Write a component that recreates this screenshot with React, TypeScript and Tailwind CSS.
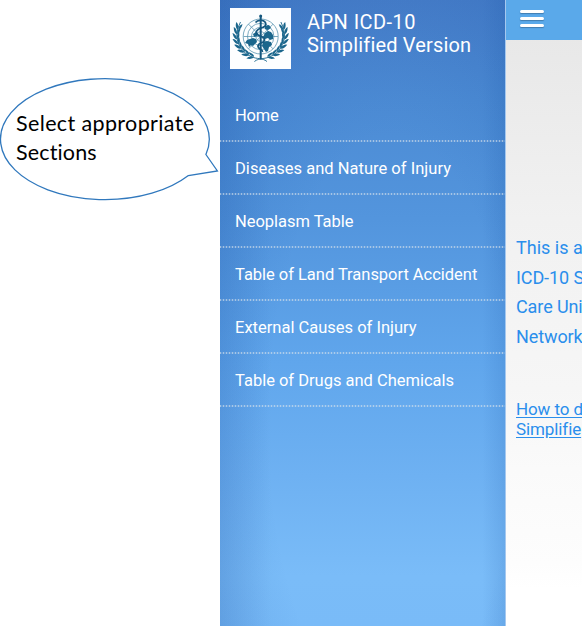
const sections = [
  { label: "Home", spacing: "tracking-[-0.25px]" },
  { label: "Diseases and Nature of Injury", spacing: "tracking-[0.02px]" },
  { label: "Neoplasm Table", spacing: "tracking-[-0.03px]" },
  { label: "Table of Land Transport Accident", spacing: "tracking-[-0.03px]" },
  { label: "External Causes of Injury", spacing: "tracking-[0px]" },
  { label: "Table of Drugs and Chemicals", spacing: "tracking-[-0.01px]" },
];

/* Angles of the leaf pairs along one laurel branch, from the bottom up. */
const leafAngles = [106, 119, 132, 145, 158, 171, 184, 196];

function Branch() {
  return (
    <g>
      <path d="M37 53.5C32 49.5 27 51.5 21 48.5C12 44.5 6.8 36 6.8 27Q7 20 10.5 14" fill="none" stroke="#1b668c" strokeWidth="0.9" />
      {leafAngles.map((a) => {
        const r = (a * Math.PI) / 180;
        const x = 30.7 + 23.7 * Math.cos(r);
        const y = 27.8 + 21.8 * Math.sin(r);
        return (
          <g key={a} transform={`translate(${x} ${y}) rotate(${a + 90})`} fill="#1b668c">
            <path d="M0 0Q0.6 -3.4 7 -3.8Q5.8 -0.4 0 0Z" />
            <path d="M0 0Q1.2 2.9 6.6 3Q5 -0.4 0 0Z" />
          </g>
        );
      })}
    </g>
  );
}

function Emblem() {
  return (
    <svg viewBox="0 0 61 61" className="h-[61px] w-[61px] shrink-0 bg-[#fdfeff]">
      <g fill="none" stroke="#4f8dab" strokeWidth="0.75">
        <circle cx="30.7" cy="28.5" r="17.5" />
        <circle cx="30.7" cy="28.5" r="13.2" />
        <circle cx="30.7" cy="28.5" r="9.2" />
        <circle cx="30.7" cy="28.5" r="4.8" />
        <path d="M13.5 28.5H48M18.5 16.2L43 40.8M43 16.2L18.5 40.8" />
      </g>
      <g fill="#1b668c">
        <path d="M17 32l3-1 3-1 3 1 1 3-2 2-2 2-2-1-2 2-1-3-3-1z" />
        <path d="M33 34l4-1 4 1 1 3-3 2-1 4-2 1-2-3-2-3z" />
        <path d="M35 25l3-2 3 1 2 3 0 4-3 1-2-2-3 1-2-2z" />
        <path d="M35 18l4-1 2 3-3 2-3-1z" />
        <path d="M23 26l3-2 2 1-1 3-3 1z" />
      </g>
      <Branch />
      <g transform="translate(61.4 0) scale(-1 1)">
        <Branch />
      </g>
      <path d="M30.7 8V51.5" stroke="#15577e" strokeWidth="2" />
      <circle cx="30.7" cy="8" r="1.5" fill="#15577e" />
      <path d="M25.5 14.5C28 11 35.5 12 35.8 16C36 21 26.5 19 26.2 24.5C26 29 35 27 34.5 32C34 36 27.5 34 28 38.5C28.5 41.5 33 41 32.5 44" fill="none" stroke="#15577e" strokeWidth="1.7" />
    </svg>
  );
}

function Callout() {
  return (
    <div className="relative mt-[77px] h-[124px] w-[220px]">
      <svg viewBox="0 0 220 124" className="absolute inset-0 h-[124px] w-[220px]">
        <path
          d="M205.5 77.5L217 94L188 98.5A104.4 60.5 0 1 1 205.5 77.5Z"
          transform="translate(0.4 0)"
          fill="white"
          stroke="#3078bd"
          strokeWidth="1.3"
        />
      </svg>
      <p className="relative pt-[32px] pl-[16px] font-['Lato',sans-serif] text-[21.5px] leading-[29px] whitespace-nowrap text-black">
        <span className="tracking-[0.37px]">Select appropriate</span>
        <br />
        <span className="tracking-[0.15px]">Sections</span>
      </p>
    </div>
  );
}

export default function App() {
  return (
    <div className="flex h-[626px] w-[582px] overflow-hidden bg-white font-['Roboto',sans-serif]">
      <div className="w-[220px] shrink-0">
        <Callout />
      </div>

      <aside className="w-[286px] shrink-0 border-r border-[#a5c8ef] bg-[radial-gradient(ellipse_270px_640px_at_60%_68%,transparent_45%,rgba(20,80,165,0.26)_100%),linear-gradient(90deg,rgba(20,70,150,0.14),transparent_18%,transparent_92%,rgba(20,80,160,0.14)),linear-gradient(180deg,#487fca_0%,#4c8bd4_16%,#5395dd_35%,#60a6ec_58%,#6eb1f2_76%,#7abcf8_92%,#79bbf8_100%)] text-white">
        <header className="flex h-[88px] gap-[16px] pt-[8px] pl-[10px]">
          <Emblem />
          <h1 className="pt-[3px] text-[20px] leading-[23px] font-normal whitespace-nowrap">
            <span className="tracking-[0.45px]">APN ICD-10</span>
            <br />
            <span className="tracking-[0.17px]">Simplified Version</span>
          </h1>
        </header>
        <nav>
          {sections.map((s) => (
            <div key={s.label} className="h-[53px]">
              <a className={`block h-[52px] pt-[3px] pl-[15px] text-[16.5px] leading-[50px] whitespace-nowrap ${s.spacing}`}>{s.label}</a>
              <div className="h-[2px] bg-[repeating-linear-gradient(90deg,rgba(220,228,235,0.6)_0_1px,rgba(220,228,235,0.15)_1px_3px)]" />
            </div>
          ))}
        </nav>
      </aside>

      <main className="w-[76px] shrink-0 overflow-hidden bg-[linear-gradient(180deg,#e8e8e8_6%,#f1f1f1_35%,#f6f6f6_62%,#fafafa_75%,#fdfdfd_90%,#ffffff_94%)] text-[#2a8eec]">
        <div className="h-[40px] bg-[#5aa9ea] pt-[10px] pl-[14px]">
          <div className="flex w-[24px] flex-col gap-[4px]">
            <span className="h-[3px] rounded-full bg-white shadow-[0_1px_1px_rgba(40,80,120,0.5)]" />
            <span className="h-[3px] rounded-full bg-white shadow-[0_1px_1px_rgba(40,80,120,0.5)]" />
            <span className="h-[3px] rounded-full bg-white shadow-[0_1px_1px_rgba(40,80,120,0.5)]" />
          </div>
        </div>
        <p className="pt-[193px] pl-[10px] text-[18px] leading-[29.7px] whitespace-nowrap">
          This is a
          <br />
          <span className="tracking-[-0.1px]">ICD-10 S</span>
          <br />
          <span className="tracking-[-0.1px]">Care Uni</span>
          <br />
          <span className="tracking-[-0.1px]">Network</span>
        </p>
        <p className="pt-[47px] pl-[10px] text-[17px] leading-[20px] tracking-[-0.1px] whitespace-nowrap underline underline-offset-2">
          How to d
          <br />
          Simplifie
        </p>
      </main>
    </div>
  );
}
